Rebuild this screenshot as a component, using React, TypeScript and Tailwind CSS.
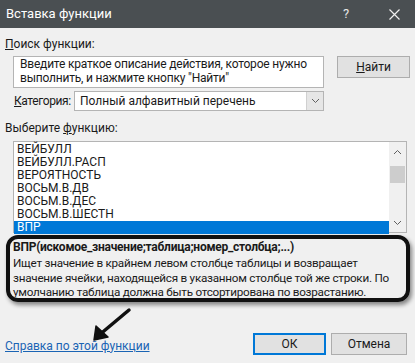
import React from "react";

const items = [
  "ВЕЙБУЛЛ",
  "ВЕЙБУЛЛ.РАСП",
  "ВЕРОЯТНОСТЬ",
  "ВОСЬМ.В.ДВ",
  "ВОСЬМ.В.ДЕС",
  "ВОСЬМ.В.ШЕСТН",
  "ВПР",
];

const ChevronDown = () => (
  <svg width="9" height="6" viewBox="0 0 9 6">
    <path d="M1 1 L4.5 4.5 L8 1" fill="none" stroke="#606060" strokeWidth="1" />
  </svg>
);

const ChevronUp = () => (
  <svg width="9" height="6" viewBox="0 0 9 6">
    <path d="M1 5 L4.5 1.5 L8 5" fill="none" stroke="#606060" strokeWidth="1" />
  </svg>
);

export default function App() {
  return (
    <div
      className="relative w-[415px] h-[363px] overflow-hidden bg-[#f0f0f0] text-[12px] leading-[16px] text-[#1a1a1a]"
      style={{ fontFamily: 'Roboto, "Noto Sans", sans-serif' }}
    >
      {/* Title bar */}
      <div className="h-[28px] bg-[#4a4f52] text-white flex items-center pl-[6px]">
        <span className="text-[13px]">Вставка функции</span>
        <span className="ml-auto text-[13px] w-[12px] mr-[34px] text-[#e6e6e6]">?</span>
        <svg width="11" height="11" viewBox="0 0 11 11" className="mr-[15px]">
          <path d="M0.5 0.5 L10.5 10.5 M10.5 0.5 L0.5 10.5" stroke="#f0f0f0" strokeWidth="1.2" />
        </svg>
      </div>

      <div className="px-[5px] pt-[8px]">
        <div>
          <span className="underline">П</span>оиск функции:
        </div>

        {/* Search row */}
        <div className="flex items-start mt-[4px] pl-[8px]">
          <div className="w-[311px] h-[32px] bg-white border border-[#b4b4b4] px-[6px] leading-[14px] tracking-[-0.2px]">
            Введите краткое описание действия, которое нужно выполнить, и нажмите кнопку "Найти"
          </div>
          <button className="ml-auto w-[73px] h-[22px] bg-[#e1e1e1] border border-[#adadad] flex items-center justify-center">
            <span><span className="underline">Н</span>айти</span>
          </button>
        </div>

        {/* Category */}
        <div className="flex items-center mt-[3px] pl-[9px]">
          <span className="whitespace-nowrap w-[60px] tracking-[-0.4px]">
            <span className="underline">К</span>атегория:
          </span>
          <div className="w-[250px] h-[20px] bg-white border border-[#b4b4b4] flex items-center pl-[5px]">
            <span>Полный алфавитный перечень</span>
            <div className="ml-auto h-full w-[17px] bg-[#e6e6e6] border-l border-[#d0d0d0] flex items-center justify-center">
              <ChevronDown />
            </div>
          </div>
        </div>

        <div className="mt-[9px]">
          Выберите <span className="underline">ф</span>ункцию:
        </div>

        {/* List box */}
        <div className="ml-[8px] mt-[5px] w-[394px] h-[92px] bg-white border border-[#b4b4b4] flex">
          <div className="flex-1 pt-[1px]">
            {items.map((it) => (
              <div
                key={it}
                className={
                  it === "ВПР"
                    ? "h-[13px] leading-[13px] pl-[3px] bg-[#0078d7] text-white"
                    : "h-[13px] leading-[13px] pl-[3px]"
                }
              >
                {it}
              </div>
            ))}
          </div>
          <div className="w-[17px] bg-[#f0f0f0] flex flex-col items-center">
            <div className="h-[20px] flex items-center justify-center">
              <ChevronUp />
            </div>
            <div className="w-[15px] h-[17px] bg-[#cdcdcd] mt-[4px]" />
            <div className="mt-auto h-[18px] flex items-center justify-center">
              <ChevronDown />
            </div>
          </div>
        </div>

        {/* Description (annotated with black frame) */}
        <div className="mt-[2px] ml-[1px] w-[404px] h-[67px] overflow-hidden border-[4px] border-[#111] rounded-[12px] shadow-[2px_3px_4px_rgba(0,0,0,0.45)] pl-[3px] pt-[1px] leading-[14.3px]">
          <div className="font-bold tracking-[-0.25px]">ВПР(искомое_значение;таблица;номер_столбца;...)</div>
          <div className="mt-[2px] text-[11.7px] tracking-[-0.25px]">
            Ищет значение в крайнем левом столбце таблицы и возвращает значение ячейки, находящейся в указанном столбце той же строки. По умолчанию таблица должна быть отсортирована по возрастанию.
          </div>
        </div>

        {/* Bottom row */}
        <div className="flex items-center mt-[31px]">
          <span className="text-[#1a64b4] underline mt-[3px]">Справка по этой функции</span>
          <button className="ml-auto w-[73px] h-[22px] bg-[#e1e1e1] border-2 border-[#0078d7] flex items-center justify-center">
            ОК
          </button>
          <button className="ml-[5px] mr-[3px] w-[76px] h-[22px] bg-[#e1e1e1] border border-[#adadad] flex items-center justify-center">
            Отмена
          </button>
        </div>
      </div>

      {/* Annotation arrow */}
      <svg
        className="absolute left-[86px] top-[306px]"
        width="50"
        height="40"
        viewBox="0 0 50 40"
      >
        <path d="M43 4 L12 30" stroke="#111" strokeWidth="3.5" strokeLinecap="round" />
        <path d="M8 34 L10 20 L22 31 Z" fill="#111" stroke="#111" strokeWidth="1.5" strokeLinejoin="round" />
      </svg>
    </div>
  );
}
